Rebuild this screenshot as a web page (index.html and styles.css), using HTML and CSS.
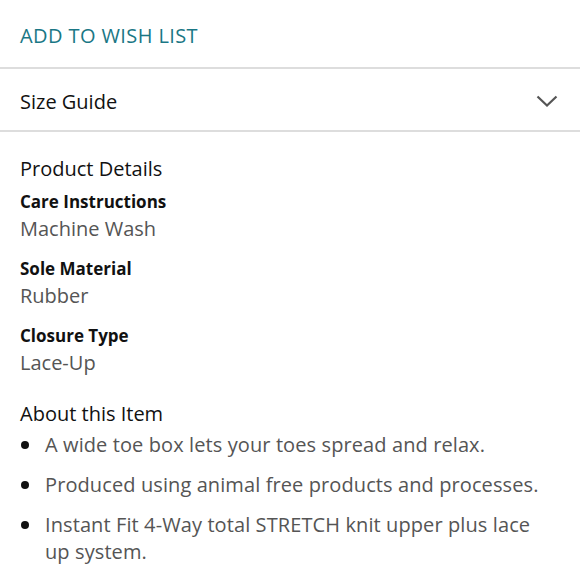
FILE: index.html
```html
<!DOCTYPE html>
<html>
<head>
<meta charset="utf-8">
<link rel="stylesheet" href="styles.css">
</head>
<body>
<div class="page">
  <div class="wish">ADD TO WISH LIST</div>
  <div class="size-row">
    <span>Size Guide</span>
    <svg class="chev" width="22" height="12" viewBox="0 0 22 12"><path d="M1.5 1.5 L11 10.5 L20.5 1.5" fill="none" stroke="#555" stroke-width="2.2"/></svg>
  </div>
  <div class="details">
    <h2 class="heading">Product Details</h2>
    <div class="attr"><div class="label">Care Instructions</div><div class="value">Machine Wash</div></div>
    <div class="attr"><div class="label">Sole Material</div><div class="value">Rubber</div></div>
    <div class="attr"><div class="label">Closure Type</div><div class="value">Lace-Up</div></div>
    <h2 class="heading about">About this Item</h2>
    <ul class="bullets">
      <li>A wide toe box lets your toes spread and relax.</li>
      <li>Produced using animal free products and processes.</li>
      <li>Instant Fit 4-Way total STRETCH knit upper plus lace up system.</li>
    </ul>
  </div>
</div>
</body>
</html>
```
FILE: styles.css
```css
* { box-sizing: border-box; }
body {
  margin: 0;
  background: #fff;
  font-family: "Open Sans", "Noto Sans", sans-serif;
  color: #111;
}
.page { width: 580px; }
.wish {
  color: #1a7785;
  font-size: 20px;
  letter-spacing: 0.4px;
  line-height: 27px;
  padding: 22px 20px 18px;
  border-bottom: 2px solid #ddd;
}
.size-row {
  display: flex;
  align-items: center;
  justify-content: space-between;
  font-size: 20px;
  line-height: 27px;
  padding: 19px 22px 15px 20px;
  border-bottom: 2px solid #ddd;
}
.chev { display: block; margin-top: -2px; }
.details { padding: 23px 20px 0; }
.heading {
  margin: 0;
  font-weight: normal;
  font-size: 20px;
  line-height: 27px;
}
.attr { margin-top: 6px; margin-bottom: 13px; }
.label { font-weight: bold; font-size: 17px; line-height: 27px; }
.value { color: #555; font-size: 20px; line-height: 27px; }
.about { margin-top: 24px; }
.bullets {
  list-style: none;
  margin: 4px 0 0;
  padding: 0 2px 0 0;
  color: #555;
  font-size: 20px;
  letter-spacing: 0.1px;
  line-height: 27px;
}
.bullets li { display: flex; margin-bottom: 13px; }
.bullets li::before {
  content: "";
  flex: none;
  width: 8px;
  height: 8px;
  border-radius: 50%;
  background: #111;
  margin: 10px 16px 0 1px;
}
```
